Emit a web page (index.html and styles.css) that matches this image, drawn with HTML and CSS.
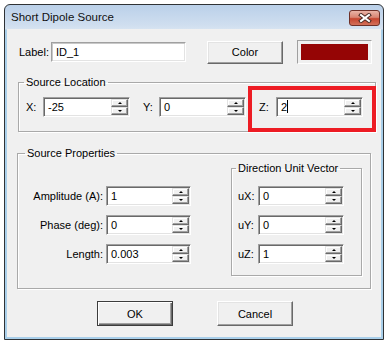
FILE: index.html
```html
<!DOCTYPE html>
<html lang="en">
<head>
    <meta charset="UTF-8">
    <meta name="viewport" content="width=device-width, initial-scale=1.0">
    <title>Short Dipole Source</title>
    <link rel="stylesheet" href="styles.css">
</head>
<body>
    <div class="window">
        <div class="titlebar">
            <span class="title">Short Dipole Source</span>
            <div class="close">
                <svg width="14" height="10" viewBox="0 0 14 10">
                    <path d="M3 2 L11 8 M11 2 L3 8" stroke="#4b2b25" stroke-width="4" stroke-linecap="square"/>
                    <path d="M3 2 L11 8 M11 2 L3 8" stroke="#fff" stroke-width="2" stroke-linecap="square"/>
                </svg>
            </div>
        </div>
        <div class="client">
            <div class="top-row">
                <span class="top-label">Label:</span>
                <div class="field name-field"><span class="val">ID_1</span></div>
                <div class="btn color-btn">Color</div>
                <div class="swatch"><div class="swatch-fill"></div></div>
            </div>

            <fieldset class="group loc">
                <legend>Source Location</legend>
                <div class="loc-row">
                    <span class="axis">X:</span>
                    <div class="field spin-field">
                        <span class="val">-25</span>
                        <div class="spin"><div class="spin-btn"><i class="up"></i></div><div class="spin-btn"><i class="down"></i></div></div>
                    </div>
                    <span class="axis gap">Y:</span>
                    <div class="field spin-field">
                        <span class="val">0</span>
                        <div class="spin"><div class="spin-btn"><i class="up"></i></div><div class="spin-btn"><i class="down"></i></div></div>
                    </div>
                    <div class="zbox">
                        <span class="axis">Z:</span>
                        <div class="field spin-field">
                            <span class="val">2<span class="caret"></span></span>
                            <div class="spin"><div class="spin-btn"><i class="up"></i></div><div class="spin-btn"><i class="down"></i></div></div>
                        </div>
                    </div>
                </div>
            </fieldset>

            <fieldset class="group props">
                <legend>Source Properties</legend>
                <div class="props-body">
                    <div class="prop-list">
                        <div class="prop-row">
                            <span class="prop-label">Amplitude (A):</span>
                            <div class="field spin-field prop-field">
                                <span class="val">1</span>
                                <div class="spin"><div class="spin-btn"><i class="up"></i></div><div class="spin-btn"><i class="down"></i></div></div>
                            </div>
                        </div>
                        <div class="prop-row">
                            <span class="prop-label">Phase (deg):</span>
                            <div class="field spin-field prop-field">
                                <span class="val">0</span>
                                <div class="spin"><div class="spin-btn"><i class="up"></i></div><div class="spin-btn"><i class="down"></i></div></div>
                            </div>
                        </div>
                        <div class="prop-row">
                            <span class="prop-label">Length:</span>
                            <div class="field spin-field prop-field">
                                <span class="val">0.003</span>
                                <div class="spin"><div class="spin-btn"><i class="up"></i></div><div class="spin-btn"><i class="down"></i></div></div>
                            </div>
                        </div>
                    </div>

                    <fieldset class="group dir">
                        <legend>Direction Unit Vector</legend>
                        <div class="prop-row">
                            <span class="dir-label">uX:</span>
                            <div class="field spin-field dir-field">
                                <span class="val">0</span>
                                <div class="spin"><div class="spin-btn"><i class="up"></i></div><div class="spin-btn"><i class="down"></i></div></div>
                            </div>
                        </div>
                        <div class="prop-row">
                            <span class="dir-label">uY:</span>
                            <div class="field spin-field dir-field">
                                <span class="val">0</span>
                                <div class="spin"><div class="spin-btn"><i class="up"></i></div><div class="spin-btn"><i class="down"></i></div></div>
                            </div>
                        </div>
                        <div class="prop-row">
                            <span class="dir-label">uZ:</span>
                            <div class="field spin-field dir-field">
                                <span class="val">1</span>
                                <div class="spin"><div class="spin-btn"><i class="up"></i></div><div class="spin-btn"><i class="down"></i></div></div>
                            </div>
                        </div>
                    </fieldset>
                </div>
            </fieldset>

            <div class="button-row">
                <div class="btn default-btn">OK</div>
                <div class="btn">Cancel</div>
            </div>
        </div>
    </div>
</body>
</html>
```

FILE: styles.css
```css
* {
    box-sizing: border-box;
}
body {
    margin: 0;
    background: #fff;
    font-family: "Liberation Sans", Arial, sans-serif;
    font-size: 11px;
    color: #000;
}
.window {
    margin: 4px 0 0 4px;
    width: 380px;
    height: 336px;
    border: 1px solid #2f3235;
    border-radius: 6px 6px 0 0;
    padding: 0 2px 2px;
    background: linear-gradient(to bottom, #bad0e9 0, #cfdeef 20px, #d6e3f1 24px, #a9cfea 25px, #a9cfea 100%);
}
.titlebar {
    height: 24px;
    display: flex;
    justify-content: space-between;
    padding: 0 1px 0 4px;
}
.title {
    font-size: 11.5px;
    line-height: 24px;
    color: #111;
}
.close {
    margin-top: 5px;
    width: 31px;
    height: 16px;
    border: 1px solid #6e3028;
    border-radius: 3px;
    background: linear-gradient(to bottom, #e9b3a6 0, #d98674 45%, #c6452f 55%, #d2705a 100%);
    display: flex;
    align-items: center;
    justify-content: center;
}
.client {
    height: 308px;
    background: #f0f0f0;
    padding-top: 11px;
}

/* top row */
.top-row {
    display: flex;
    align-items: center;
    height: 24px;
    margin-left: 12px;
}
.top-label {
    width: 32px;
}
.field {
    height: 20px;
    background: #fff;
    border: 1px solid;
    border-color: #a0a0a0 #fff #fff #a0a0a0;
    box-shadow: inset 1px 1px #696969, inset -1px -1px #e3e3e3;
    display: flex;
    align-items: center;
    padding: 1px;
}
.val {
    flex: 1;
    padding-left: 3px;
    line-height: 16px;
}
.name-field {
    width: 135px;
    border-color: #a0a0a0 #fff #fff #a0a0a0;
    box-shadow: inset 1px 1px #c8c8c8, inset -1px -1px #e3e3e3;
}
.btn {
    width: 76px;
    height: 25px;
    border: 1px solid;
    border-color: #fff #696969 #696969 #fff;
    box-shadow: inset -1px -1px #a0a0a0, inset 1px 1px #e3e3e3;
    background: #f0f0f0;
    display: flex;
    align-items: center;
    justify-content: center;
}
.color-btn {
    height: 23px;
    margin-left: 21px;
}
.swatch {
    width: 75px;
    height: 24px;
    margin-left: 14px;
    border: 1px solid;
    border-color: #a0a0a0 #fff #fff #a0a0a0;
    padding: 3px;
}
.swatch-fill {
    height: 100%;
    background: #950505;
}

/* group boxes */
.group {
    margin: 0;
    border: 1px solid #a9a9a9;
    box-shadow: inset 1px 1px #fff, 1px 1px #fff;
    min-inline-size: 0;
}
.group legend {
    line-height: 13px;
    padding: 0 2px;
    margin-left: -2px;
}
.loc {
    width: 358px;
    margin: 12px 0 0 11px;
    padding: 8px 0 14px 7px;
}
.loc-row {
    display: flex;
    align-items: center;
}
.axis {
    width: 17px;
}
.axis.gap {
    width: 16px;
    margin-left: 13px;
}
.spin-field {
    width: 87px;
}
.spin {
    width: 17px;
    height: 16px;
    display: flex;
    flex-direction: column;
}
.spin-btn {
    flex: 1;
    background: #f0f0f0;
    border: 1px solid;
    border-color: #e3e3e3 #696969 #696969 #e3e3e3;
    box-shadow: inset -1px -1px #a0a0a0, inset 1px 1px #fff;
    display: flex;
    align-items: center;
    justify-content: center;
}
.spin-btn i {
    width: 0;
    height: 0;
    border-left: 2px solid transparent;
    border-right: 2px solid transparent;
}
.spin-btn .up {
    border-bottom: 2px solid #000;
}
.spin-btn .down {
    border-top: 2px solid #000;
}
.zbox {
    position: relative;
    display: flex;
    align-items: center;
    margin-left: 13px;
}
.zbox::after {
    content: "";
    position: absolute;
    left: -11px;
    right: -13px;
    top: -11px;
    bottom: -15px;
    border: 4px solid #ed1c24;
}
.caret {
    display: inline-block;
    width: 1px;
    height: 13px;
    background: #000;
    vertical-align: -2px;
}

/* properties */
.props {
    width: 354px;
    margin: 15px 0 0 10px;
    padding: 2px 8px 12px 9px;
}
.props-body {
    display: flex;
    align-items: flex-start;
}
.prop-list {
    margin-top: 24px;
    display: flex;
    flex-direction: column;
    gap: 9px;
}
.prop-row {
    display: flex;
    align-items: center;
}
.prop-label {
    width: 79px;
    padding-right: 3px;
    text-align: right;
}
.prop-field {
    width: 85px;
}
.dir {
    width: 131px;
    margin-left: 40px;
    padding: 11px 0 11px 6px;
    display: flex;
    flex-direction: column;
    gap: 9px;
}
.dir-label {
    width: 20px;
}
.dir-field {
    width: 86px;
}

/* buttons */
.button-row {
    display: flex;
    justify-content: center;
    gap: 44px;
    margin-top: 12px;
    padding-left: 2px;
}
.default-btn {
    border: 1px solid #3c3c3c;
    box-shadow: inset 1px 1px #fff, inset -1px -1px #696969, inset -2px -2px #a0a0a0;
}
```
